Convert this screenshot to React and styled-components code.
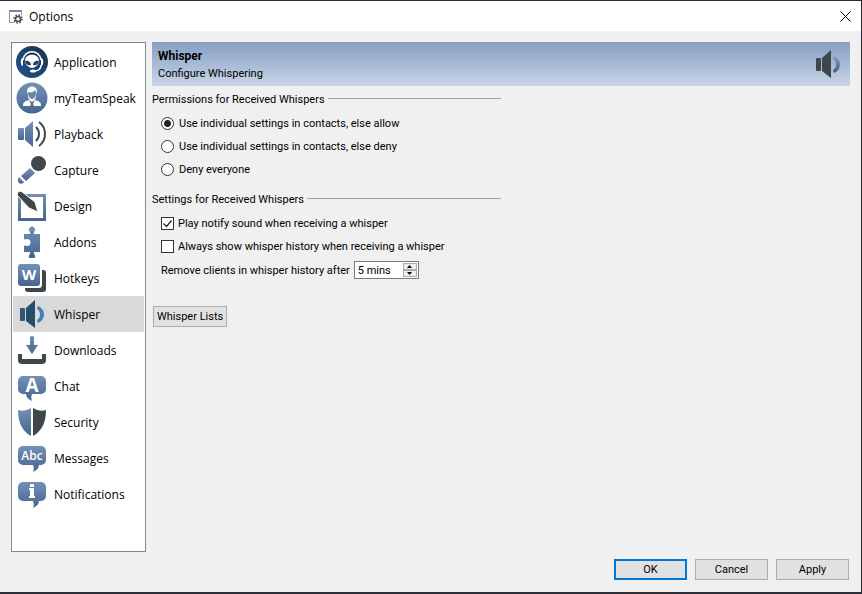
import { useState } from "react";
import styled, { createGlobalStyle } from "styled-components";

const GlobalStyle = createGlobalStyle`
  * {
    box-sizing: border-box;
  }
  body {
    margin: 0;
    font-family: Roboto, sans-serif;
    font-size: 11px;
    color: #000;
  }
  button, input {
    font: inherit;
    color: inherit;
  }
`;

const Window = styled.div`
  display: flex;
  flex-direction: column;
  min-height: 100vh;
  background: #f0f0f0;
  border: 1px solid #2b2d31;
  border-left: none;
  border-bottom: 2px solid #2b2f38;
`;

const TitleBar = styled.header`
  display: flex;
  align-items: center;
  gap: 6px;
  height: 30px;
  padding: 0 8px;
  background: #fff;
`;

const Title = styled.h1`
  flex: 1;
  margin: 0;
  font: 12px "Open Sans", sans-serif;
`;

const CloseButton = styled.button`
  display: flex;
  padding: 2px;
  border: none;
  background: none;
`;

const Body = styled.div`
  display: flex;
  flex: 1;
  gap: 6px;
  padding: 11px 11px 7px;
`;

const Sidebar = styled.nav`
  flex: none;
  width: 135px;
  padding: 1px;
  background: #fff;
  border: 1px solid #828790;
`;

const NavItem = styled.button`
  display: flex;
  align-items: center;
  gap: 6px;
  width: 100%;
  height: 36px;
  padding: 0 3px;
  border: none;
  background: ${(props) => (props.$active ? "#d9d9d9" : "transparent")};
  font-family: "Open Sans", sans-serif;
  font-size: 12px;
  white-space: nowrap;

  & svg {
    flex: none;
  }
`;

const Page = styled.main`
  flex: 1;
`;

const Banner = styled.div`
  display: flex;
  align-items: center;
  justify-content: space-between;
  height: 44px;
  margin-bottom: 5px;
  padding: 0 6px;
  background: linear-gradient(#859fc3, #c9d5e6);

  & h2 {
    margin: 0;
    padding-top: 2px;
    font-size: 12px;
    line-height: 18px;
  }
  & p {
    margin: 0;
    line-height: 18px;
  }
`;

const Group = styled.fieldset`
  width: 50%;
  min-width: 300px;
  margin: 0 0 10px;
  padding: 0;
  border: none;
`;

const Legend = styled.legend`
  display: flex;
  gap: 3px;
  width: 100%;
  margin-bottom: 4px;
  padding: 0;
  line-height: 17px;
  white-space: nowrap;

  &::after {
    content: "";
    flex: 1;
    height: 1px;
    margin-top: 7px;
    background: #a0a0a0;
  }
`;

const Options = styled.div`
  padding-left: 9px;
`;

const OptionRow = styled.label`
  display: flex;
  align-items: center;
  gap: ${(props) => props.$gap || 5}px;
  height: 23px;
  white-space: nowrap;
`;

const Radio = styled.input`
  appearance: none;
  width: 13px;
  height: 13px;
  margin: 0;
  border: 1px solid #333;
  border-radius: 50%;
  background: #fff;

  &:checked {
    background: radial-gradient(circle, #222 3px, #fff 4px);
  }
`;

const CheckBox = styled.input`
  appearance: none;
  width: 13px;
  height: 13px;
  margin: 0;
  border: 1px solid #333;
  background: #fff;
`;

const CheckWrap = styled.span`
  display: grid;

  & > * {
    grid-area: 1 / 1;
  }
  & svg {
    pointer-events: none;
  }
`;

const SpinRow = styled.div`
  display: flex;
  align-items: center;
  gap: 4px;
  padding: 3px 0 0;
  white-space: nowrap;
`;

const SpinBox = styled.div`
  display: flex;
  width: 65px;
  height: 18px;
  padding: 1px;
  background: #fff;
  border: 1px solid #7a7a7a;

  & input {
    flex: 1;
    min-width: 0;
    padding: 0 2px;
    border: none;
    outline: none;
    background: none;
  }
`;

const SpinButtons = styled.div`
  display: flex;
  flex-direction: column;
  width: 14px;
`;

const SpinButton = styled.button`
  display: flex;
  flex: 1;
  align-items: center;
  justify-content: center;
  padding: 0;
  border: 1px solid #acacac;
  background: #f0f0f0;
`;

const Button = styled.button`
  min-width: 73px;
  height: 21px;
  padding: 0 3px;
  background: #e1e1e1;
  border: ${(props) => (props.$primary ? "2px solid #0078d7" : "1px solid #adadad")};
`;

const ListsRow = styled.div`
  padding: 17px 1px 0;
`;

const Footer = styled.footer`
  display: flex;
  justify-content: flex-end;
  gap: 8px;
  padding: 0 12px 12px;
`;

const BLUE = "url(#blue)";
const DARK = "#3f474b";

const Defs = styled.svg`
  display: block;
  width: 0;
  height: 0;
`;

const Gradients = () => (
  <Defs aria-hidden="true">
    <defs>
      <linearGradient id="blue" x1="0" y1="0" x2="0" y2="1">
        <stop offset="0" stopColor="#7590b8" />
        <stop offset="1" stopColor="#45658f" />
      </linearGradient>
      <linearGradient id="navy" x1="1" y1="0" x2="0" y2="1">
        <stop offset="0" stopColor="#1c3049" />
        <stop offset="1" stopColor="#1d568f" />
      </linearGradient>
      <linearGradient id="wave" x1="0" y1="0" x2="0" y2="1">
        <stop offset="0" stopColor="#86a0c4" />
        <stop offset="1" stopColor="#3c5b83" />
      </linearGradient>
    </defs>
  </Defs>
);

const Glyph = ({ children }) => (
  <svg width="32" height="32" viewBox="0 0 32 32" aria-hidden="true">
    {children}
  </svg>
);

const GlyphText = styled.text`
  fill: #fff;
  font-family: "Open Sans", sans-serif;
  font-weight: ${(props) => props.$weight || 700};
  text-anchor: middle;
`;

const Bubble = ({ children }) => (
  <Glyph>
    <path
      fill={BLUE}
      d="M7 4h18a5 5 0 0 1 5 5v9a5 5 0 0 1-5 5h-2c0 3-2 5-6 7 1-2 1-4 0-7H7a5 5 0 0 1-5-5V9a5 5 0 0 1 5-5z"
    />
    {children}
  </Glyph>
);

const Speaker = ({ box, cone, wave }) => (
  <Glyph>
    <rect x="4" y="10" width="5" height="13" rx="1" fill={box} />
    <path d="M10 10l9-8v28l-9-7z" fill={cone} />
    <path d="M22 8c8 3 8 14 0 17l-1-3c4-2 4-9 0-11z" fill={wave} />
  </Glyph>
);

const icons = {
  Application: (
    <Glyph>
      <circle cx="16" cy="16" r="16" fill="url(#navy)" />
      <path d="M7 14C8 3 24 3 25 14" fill="none" stroke="#fff" strokeWidth="1.5" />
      <path d="M7 12v8c-3 0-3-8 0-8zM25 12v8c3 0 3-8 0-8z" fill="#fff" />
      <path d="M9 14c1-7 13-7 14 0 1 4-4 8-7 8s-8-4-7-8z" fill="#fff" />
      <path d="M9 15c3-1 6 1 6 4-3 1-6-1-6-4zM23 15c-3-1-6 1-6 4 3 1 6-1 6-4z" fill="#1b426c" />
      <path d="M25 19c0 4-3 6-7 6" fill="none" stroke="#fff" strokeWidth="1.5" />
      <ellipse cx="17" cy="25" rx="3" ry="1.5" fill="#fff" />
    </Glyph>
  ),
  myTeamSpeak: (
    <Glyph>
      <circle cx="16" cy="16" r="15.5" fill={BLUE} />
      <path d="M7 24c0-4 2-5 6-6h6c4 1 6 2 6 6z" fill="#fff" />
      <path d="M11 9c0-6 10-6 10 0l-1 4c0 4-2 6-4 6s-4-2-4-6z" fill="#fff" />
      <path d="M12 10c3 1 6 0 7-2l1 2c0 5-2 7-4 7s-4-3-4-7z" fill="#6784ab" />
      <path d="M13 18l3 2 3-2-2 4 1 2h-4l1-2z" fill="#506f99" />
    </Glyph>
  ),
  Playback: (
    <Glyph>
      <rect x="2" y="10" width="6" height="12" rx="1" fill={BLUE} />
      <path d="M9 10l8-7v26l-8-7z" fill={BLUE} />
      <path d="M20 9c4 4 4 10 0 14M23 4c8 6 8 18 0 24" fill="none" stroke={DARK} strokeWidth="2" />
    </Glyph>
  ),
  Capture: (
    <Glyph>
      <circle cx="22.5" cy="9.5" r="7.5" fill={DARK} />
      <path d="M14 14l5 5-9 8-5-5z" fill={BLUE} />
      <path d="M3 23l5 5c-1 2-4 2-5 1s-2-4 0-6z" fill={BLUE} />
    </Glyph>
  ),
  Design: (
    <Glyph>
      <path d="M2 4h28v27H2zM5 7v21h22V7z" fillRule="evenodd" fill={BLUE} />
      <path d="M1 5q0-4 4-4l14 11 3 10-9-4z" fill={DARK} stroke="#fff" />
    </Glyph>
  ),
  Addons: (
    <Glyph>
      <path
        d="M8 8h6v-2a3 3 0 1 1 4 0v2h6v18h-6v2a3 3 0 1 1-4 0v-2H8v-6c1-1 2 0 3 0a3.5 3.5 0 0 0 0-7c-1 0-2 1-3 0z"
        fill={BLUE}
      />
    </Glyph>
  ),
  Hotkeys: (
    <Glyph>
      <path d="M26 8h1q3 0 3 3v16q0 3-3 3H12q-3 0-3-3v-1h14q3 0 3-3z" fill={DARK} />
      <rect x="2" y="2" width="22" height="22" rx="3" fill={BLUE} />
      <GlyphText x="13" y="18" fontSize="15">W</GlyphText>
    </Glyph>
  ),
  Whisper: <Speaker box="#2f5672" cone="#264e6b" wave="#427eb5" />,
  Downloads: (
    <Glyph>
      <path d="M14 3q2-2 4 0v8h4l-6 9-6-9h4z" fill={BLUE} />
      <path d="M2 20h4v5h20v-5h4v6q0 4-4 4H6q-4 0-4-4z" fill={DARK} />
    </Glyph>
  ),
  Chat: (
    <Glyph>
      <path
        fill={BLUE}
        d="M7 6h18a5 5 0 0 1 5 5v8a5 5 0 0 1-5 5h-9c-1 3-1 4 0 7-4-2-6-4-6-7H7a5 5 0 0 1-5-5v-8a5 5 0 0 1 5-5z"
      />
      <GlyphText x="16" y="22" fontSize="19">A</GlyphText>
    </Glyph>
  ),
  Security: (
    <Glyph>
      <path d="M15 2v28C6 25 2 16 2 4q7 2 13-2z" fill={BLUE} />
      <path d="M17 2v28c9-5 13-14 13-26q-7 2-13-2z" fill={DARK} />
    </Glyph>
  ),
  Messages: (
    <Bubble>
      <GlyphText x="16" y="18" fontSize="12" $weight={600}>Abc</GlyphText>
    </Bubble>
  ),
  Notifications: (
    <Bubble>
      <path d="M14 6h4v3h-4zM13 10h5v8h1v2h-6v-2h1v-6h-1z" fill="#fff" />
    </Bubble>
  ),
};

const permissions = [
  "Use individual settings in contacts, else allow",
  "Use individual settings in contacts, else deny",
  "Deny everyone",
];

const Check = ({ label, defaultChecked = false }) => {
  const [checked, setChecked] = useState(defaultChecked);

  return (
    <OptionRow $gap={4}>
      <CheckWrap>
        <CheckBox type="checkbox" checked={checked} onChange={() => setChecked(!checked)} />
        {checked && (
          <svg width="13" height="13" viewBox="0 0 13 13">
            <path d="M2.5 6.5l3 3 5-6" fill="none" stroke="#222" strokeWidth="1.2" />
          </svg>
        )}
      </CheckWrap>
      {label}
    </OptionRow>
  );
};

const App = () => {
  const [page, setPage] = useState("Whisper");
  const [permission, setPermission] = useState(0);
  const [mins, setMins] = useState(5);

  return (
    <Window>
      <GlobalStyle />
      <Gradients />
      <TitleBar>
        <svg width="15" height="15" viewBox="0 0 15 15" aria-hidden="true">
          <path d="M6 13.5H1.5V1.5h12V6" fill="none" stroke="#8197b4" />
          <path d="M1 1h13v2H1z" fill="#7088aa" />
          <circle cx="10" cy="10" r="2.5" fill="none" stroke="#434b50" strokeWidth="1.5" />
          <circle cx="10" cy="10" r="4" fill="none" stroke="#434b50" strokeWidth="1.5" strokeDasharray="1.6 1.54" />
        </svg>
        <Title>Options</Title>
        <CloseButton aria-label="Close">
          <svg width="11" height="11" viewBox="0 0 11 11">
            <path d="M.5.5l10 10M10.5.5l-10 10" stroke="#000" />
          </svg>
        </CloseButton>
      </TitleBar>
      <Body>
        <Sidebar>
          {Object.keys(icons).map((name) => (
            <NavItem key={name} $active={name === page} onClick={() => setPage(name)}>
              {icons[name]}
              {name}
            </NavItem>
          ))}
        </Sidebar>
        <Page>
          <Banner>
            <div>
              <h2>Whisper</h2>
              <p>Configure Whispering</p>
            </div>
            <Speaker box={DARK} cone={DARK} wave="url(#wave)" />
          </Banner>
          <Group>
            <Legend>Permissions for Received Whispers</Legend>
            <Options>
              {permissions.map((text, i) => (
                <OptionRow key={text}>
                  <Radio
                    type="radio"
                    name="permission"
                    checked={permission === i}
                    onChange={() => setPermission(i)}
                  />
                  {text}
                </OptionRow>
              ))}
            </Options>
          </Group>
          <Group>
            <Legend>Settings for Received Whispers</Legend>
            <Options>
              <Check label="Play notify sound when receiving a whisper" defaultChecked />
              <Check label="Always show whisper history when receiving a whisper" />
              <SpinRow>
                <label htmlFor="mins">Remove clients in whisper history after</label>
                <SpinBox>
                  <input
                    id="mins"
                    value={`${mins} mins`}
                    onChange={(e) => setMins(parseInt(e.target.value) || 0)}
                  />
                  <SpinButtons>
                    <SpinButton aria-label="More" onClick={() => setMins(mins + 1)}>
                      <svg width="5" height="3" viewBox="0 0 5 3">
                        <path d="M0 3l2.5-3L5 3z" />
                      </svg>
                    </SpinButton>
                    <SpinButton aria-label="Less" onClick={() => setMins(Math.max(0, mins - 1))}>
                      <svg width="5" height="3" viewBox="0 0 5 3">
                        <path d="M0 0l2.5 3L5 0z" />
                      </svg>
                    </SpinButton>
                  </SpinButtons>
                </SpinBox>
              </SpinRow>
            </Options>
          </Group>
          <ListsRow>
            <Button>Whisper Lists</Button>
          </ListsRow>
        </Page>
      </Body>
      <Footer>
        <Button $primary>OK</Button>
        <Button>Cancel</Button>
        <Button>Apply</Button>
      </Footer>
    </Window>
  );
};

export default App;
